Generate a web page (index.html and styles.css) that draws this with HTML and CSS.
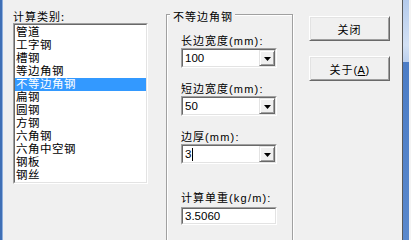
FILE: index.html
```html
<!DOCTYPE html>
<html>
<head>
<meta charset="utf-8">
<link rel="stylesheet" href="styles.css">
</head>
<body>
<div class="window">
  <div class="frame-left"></div>
  <div class="client">
    <div class="list-col">
      <div class="caption">计算类别:</div>
      <div class="listbox">
        <ul class="listbox-inner">
          <li>管道</li>
          <li>工字钢</li>
          <li>槽钢</li>
          <li>等边角钢</li>
          <li class="sel">不等边角钢</li>
          <li>扁钢</li>
          <li>圆钢</li>
          <li>方钢</li>
          <li>六角钢</li>
          <li>六角中空钢</li>
          <li>钢板</li>
          <li>钢丝</li>
        </ul>
      </div>
    </div>
    <div class="group">
      <div class="group-title">不等边角钢</div>
      <div class="field first">
        <div class="field-label">长边宽度<span class="lat">(mm):</span></div>
        <div class="combo"><div class="combo-inner"><span class="val">100</span><span class="drop"><svg width="7" height="4" viewBox="0 0 7 4"><polygon points="0,0 7,0 3.5,4" fill="#000"/></svg></span></div></div>
      </div>
      <div class="field">
        <div class="field-label">短边宽度<span class="lat">(mm):</span></div>
        <div class="combo"><div class="combo-inner"><span class="val">50</span><span class="drop"><svg width="7" height="4" viewBox="0 0 7 4"><polygon points="0,0 7,0 3.5,4" fill="#000"/></svg></span></div></div>
      </div>
      <div class="field">
        <div class="field-label">边厚<span class="lat">(mm):</span></div>
        <div class="combo"><div class="combo-inner"><span class="val">3<span class="caret"></span></span><span class="drop"><svg width="7" height="4" viewBox="0 0 7 4"><polygon points="0,0 7,0 3.5,4" fill="#000"/></svg></span></div></div>
      </div>
      <div class="field result">
        <div class="field-label">计算单重<span class="lat">(kg/m):</span></div>
        <div class="edit"><div class="edit-inner">3.5060</div></div>
      </div>
    </div>
    <div class="buttons">
      <button class="btn">关闭</button>
      <button class="btn">关于<span class="lat">(<u>A</u>)</span></button>
    </div>
  </div>
  <div class="frame-right"></div>
</div>
</body>
</html>
```
FILE: styles.css
```css
* { box-sizing: border-box; }
html, body { margin: 0; padding: 0; }
body {
  width: 411px;
  height: 240px;
  overflow: hidden;
  background: #f0f0f0;
  font-family: "Noto Sans CJK SC", sans-serif;
  font-size: 11px;
  color: #000;
}
.window { display: flex; height: 240px; overflow: hidden; }
.frame-left {
  width: 3px;
  flex: none;
  background: linear-gradient(to right, #3f6fb5 0, #3f6fb5 2px, #8fb0de 2px);
}
.client {
  flex: 1;
  display: flex;
  align-items: flex-start;
  padding-left: 10px;
  min-width: 0;
  height: 240px;
  overflow: hidden;
}
.list-col { width: 135px; flex: none; padding-top: 9px; }
.caption { height: 14px; line-height: 14px; letter-spacing: 1px; white-space: nowrap; }
.listbox {
  height: 161px;
  border: 1px solid;
  border-color: #a0a0a0 #fff #fff #a0a0a0;
}
.listbox-inner {
  list-style: none;
  margin: 0;
  padding: 1px 0 0;
  height: 100%;
  overflow: hidden;
  background: #fff;
  border: 1px solid;
  border-color: #696969 #e3e3e3 #e3e3e3 #696969;
  font-family: "Liberation Sans", "Noto Sans CJK SC", sans-serif;
  font-size: 11.5px;
  letter-spacing: 0.5px;
}
.listbox-inner li { height: 13px; line-height: 13px; padding-left: 1px; white-space: nowrap; }
.listbox-inner li.sel { background: #3399ff; color: #fff; }

.group {
  flex: none;
  width: 127px;
  height: 232px;
  margin-left: 18px;
  margin-top: 14px;
  border: 1px solid #a0a0a0;
  box-shadow: inset 1px 1px #fff, 1px 1px #fff;
  padding-left: 14px;
}
.group-title {
  width: fit-content;
  margin: -6px 0 0 -11px;
  padding: 0 2px 0 3px;
  height: 14px;
  line-height: 14px;
  background: #f0f0f0;
  letter-spacing: 1px;
  white-space: nowrap;
}
.field { margin-top: 13px; }
.field.first { margin-top: 10px; }
.field.result { margin-top: 26px; }
.field-label { height: 14px; line-height: 14px; letter-spacing: 1px; white-space: nowrap; }
.lat { font-family: "Liberation Sans", sans-serif; letter-spacing: 1.2px; }

.combo, .edit {
  width: 96px;
  border: 1px solid;
  border-color: #a0a0a0 #fff #fff #a0a0a0;
  background: #fff;
}
.combo { height: 20px; margin-top: 1px; }
.edit { height: 18px; margin-top: 3px; }
.combo-inner, .edit-inner {
  height: 100%;
  border: 1px solid;
  border-color: #696969 #e3e3e3 #e3e3e3 #696969;
}
.combo-inner { display: flex; align-items: stretch; }
.val, .edit-inner {
  font-family: "Liberation Sans", sans-serif;
  font-size: 11.5px;
  padding-left: 2px;
}
.val { flex: 1; line-height: 16px; display: flex; align-items: center; }
.edit-inner { line-height: 14px; }
.caret { display: inline-block; width: 1px; height: 13px; background: #000; margin-left: 1px; }
.drop {
  width: 16px;
  flex: none;
  display: flex;
  align-items: center;
  justify-content: center;
  background: #f0f0f0;
  border: 1px solid;
  border-color: #e3e3e3 #696969 #696969 #e3e3e3;
  box-shadow: inset 1px 1px #fff, inset -1px -1px #a0a0a0;
}
.drop svg { display: block; margin-top: 1px; }

.buttons {
  flex: none;
  display: flex;
  flex-direction: column;
  gap: 15px;
  margin-left: 16px;
  margin-top: 16px;
  width: 81px;
}
.btn {
  height: 25px;
  width: 81px;
  padding: 0;
  background: #f0f0f0;
  border: 1px solid;
  border-color: #fff #696969 #696969 #fff;
  box-shadow: inset 1px 1px #e3e3e3, inset -1px -1px #a0a0a0;
  font-family: "Noto Sans CJK SC", sans-serif;
  font-size: 11px;
  letter-spacing: 1px;
  color: #000;
}
.btn .lat { letter-spacing: 0.5px; }
.frame-right {
  width: 9px;
  flex: none;
  border-left: 1px solid #5a5a5a;
  background: linear-gradient(#b5cbec 0, #d3e1f4 45px, #bcd0ee 62px, #4c7dc6 62px, #5a88cc 100%);
  box-shadow: inset -2px 0 #f4f4f4;
}
```
